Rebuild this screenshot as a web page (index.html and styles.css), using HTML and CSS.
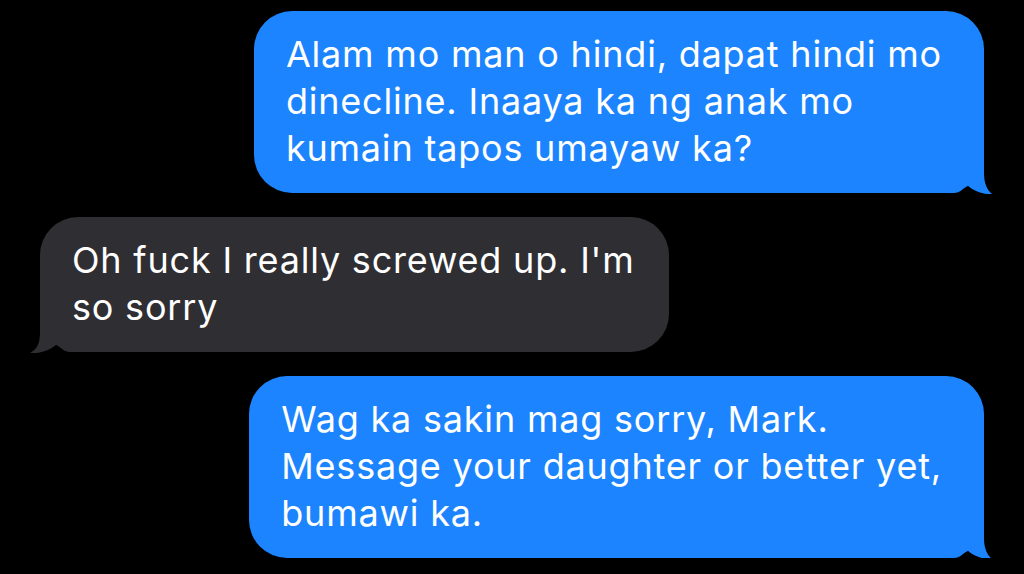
FILE: index.html
```html
<!DOCTYPE html>
<html lang="en">

<head>
  <meta charset="UTF-8">
  <meta name="viewport" content="width=device-width, initial-scale=1.0">
  <title>Messages</title>
  <link rel="stylesheet" href="styles.css">
</head>

<body>
  <div class="thread">
    <div class="bubble sent">
      Alam mo man o hindi, dapat hindi mo<br>
      dinecline. Inaaya ka ng anak mo<br>
      kumain tapos umayaw ka?
      <svg class="tail" width="56" height="42" viewBox="0 0 56 42">
        <path d="M0 40 L0 0 L48 0 L48 20 C48 30 51 37 56 41 C50 41.5 40 40 31 32 C27 36 24 40 18 40 Z" />
      </svg>
    </div>

    <div class="bubble received">
      Oh fuck I really screwed up. I'm<br>
      so sorry
      <svg class="tail" width="58" height="42" viewBox="0 0 58 42">
        <path d="M0 40 L0 0 L48 0 L48 20 C48 30 50 37 58 41 C50 41.5 40 40 31 32 C27 36 24 40 18 40 Z" />
      </svg>
    </div>

    <div class="bubble sent">
      Wag ka sakin mag sorry, Mark.<br>
      Message your daughter or better yet,<br>
      bumawi ka.
      <svg class="tail" width="56" height="42" viewBox="0 0 56 42">
        <path d="M0 40 L0 0 L48 0 L48 20 C48 30 51 37 56 41 C50 41.5 40 40 31 32 C27 36 24 40 18 40 Z" />
      </svg>
    </div>
  </div>
</body>

</html>
```

FILE: styles.css
```css
html {
  background: #000;
}

body {
  margin: 0;
  font-family: Inter, "Noto Sans", Arial, sans-serif;
  color: #fff;
}

.thread {
  display: flex;
  flex-direction: column;
  gap: 24px;
  padding: 11px 40px 0 40px;
}

.bubble {
  position: relative;
  width: fit-content;
  padding: 20px 42px 21px 32px;
  border-radius: 38px;
  font-size: 36px;
  line-height: 47px;
  letter-spacing: 0.8px;
}

.sent {
  align-self: flex-end;
  background: #1b84fe;
}

.received {
  align-self: flex-start;
  padding-right: 34px;
  background: #2f2e32;
}

/* tail sits behind the bubble so it never covers the text */
.tail {
  position: absolute;
  z-index: -1;
  bottom: -2px;
  display: block;
}

.sent .tail {
  right: -8px;
  fill: #1b84fe;
}

.received .tail {
  left: -10px;
  fill: #2f2e32;
  transform: scaleX(-1);
}
```
